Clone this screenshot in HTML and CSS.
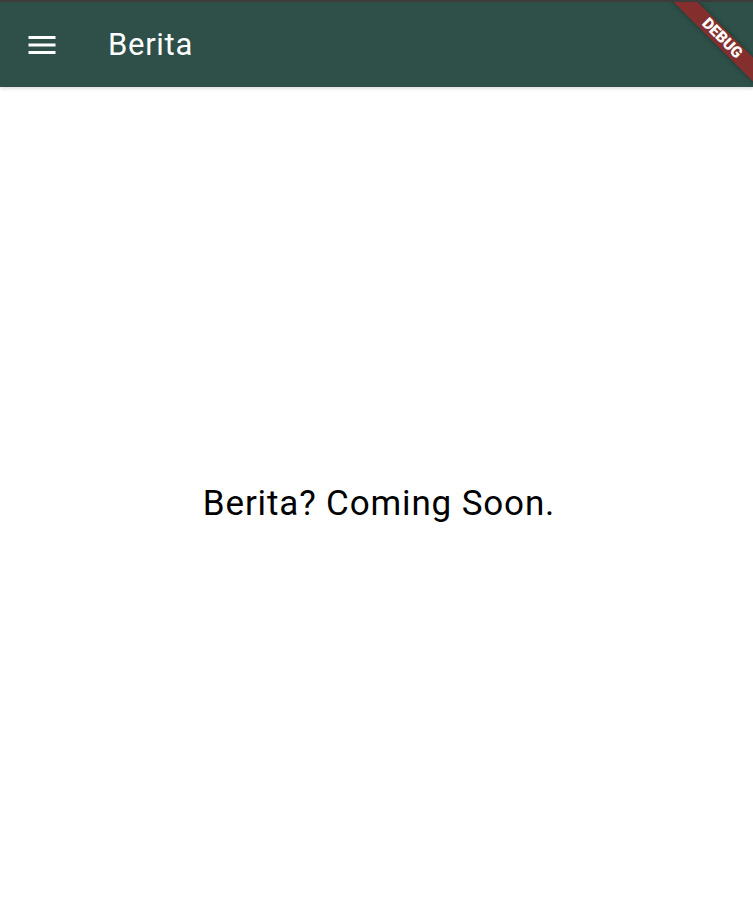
FILE: index.html
```html
<!DOCTYPE html>
<html>
<head>
<meta charset="utf-8">
<link rel="stylesheet" href="styles.css">
</head>
<body>
<div class="app">
  <header class="appbar">
    <button class="menu-btn" aria-label="menu">
      <svg width="36" height="36" viewBox="0 0 24 24"><path d="M3 18h18v-2H3v2zm0-5h18v-2H3v2zm0-7v2h18V6H3z" fill="#fff"/></svg>
    </button>
    <h1 class="title">Berita</h1>
  </header>
  <main class="content">
    <p class="message">Berita? Coming Soon.</p>
  </main>
  <div class="statusline"></div>
  <div class="banner-wrap"><div class="banner">DEBUG</div></div>
</div>
</body>
</html>
```
FILE: styles.css
```css
html, body {
  margin: 0;
  padding: 0;
  height: 100%;
  background: #fff;
  font-family: Roboto, "Liberation Sans", sans-serif;
}
.app {
  height: 100%;
  display: flex;
  flex-direction: column;
  position: relative;
  overflow: hidden;
}
.appbar {
  height: 87px;
  flex: none;
  background: #2e5049;
  display: flex;
  align-items: center;
  padding-left: 24px;
  box-sizing: border-box;
  box-shadow: 0 2px 3px rgba(0,0,0,0.12);
  position: relative;
  z-index: 1;
  padding-top: 2px;
}
.menu-btn {
  width: 36px;
  height: 36px;
  padding: 0;
  border: 0;
  background: none;
  display: flex;
}
.title {
  margin: 0 0 0 48px;
  font-size: 31px;
  letter-spacing: 0.7px;
  font-weight: 400;
  color: #fff;
  line-height: 1;
}
.content {
  flex: 1;
  display: flex;
  align-items: center;
  justify-content: center;
}
.message {
  margin: 4px 0 0 5px;
  font-size: 35px;
  letter-spacing: 0.85px;
  color: #000;
}
.statusline {
  position: absolute;
  top: 0;
  left: 0;
  right: 0;
  height: 2px;
  background: #3c3c3c;
  z-index: 3;
}
.banner-wrap {
  position: absolute;
  top: 0;
  right: 0;
  width: 100px;
  height: 100px;
  overflow: hidden;
  z-index: 2;
}
.banner {
  position: absolute;
  left: -11px;
  top: 30px;
  width: 160px;
  height: 17px;
  line-height: 17px;
  background: #842f2d;
  color: #fff;
  font-family: Roboto, "Liberation Sans", sans-serif;
  font-weight: 900;
  font-size: 15.5px;
  text-align: center;
  transform: rotate(45deg);
  box-shadow: 0 0 5px rgba(0,0,0,0.35);
}
```
